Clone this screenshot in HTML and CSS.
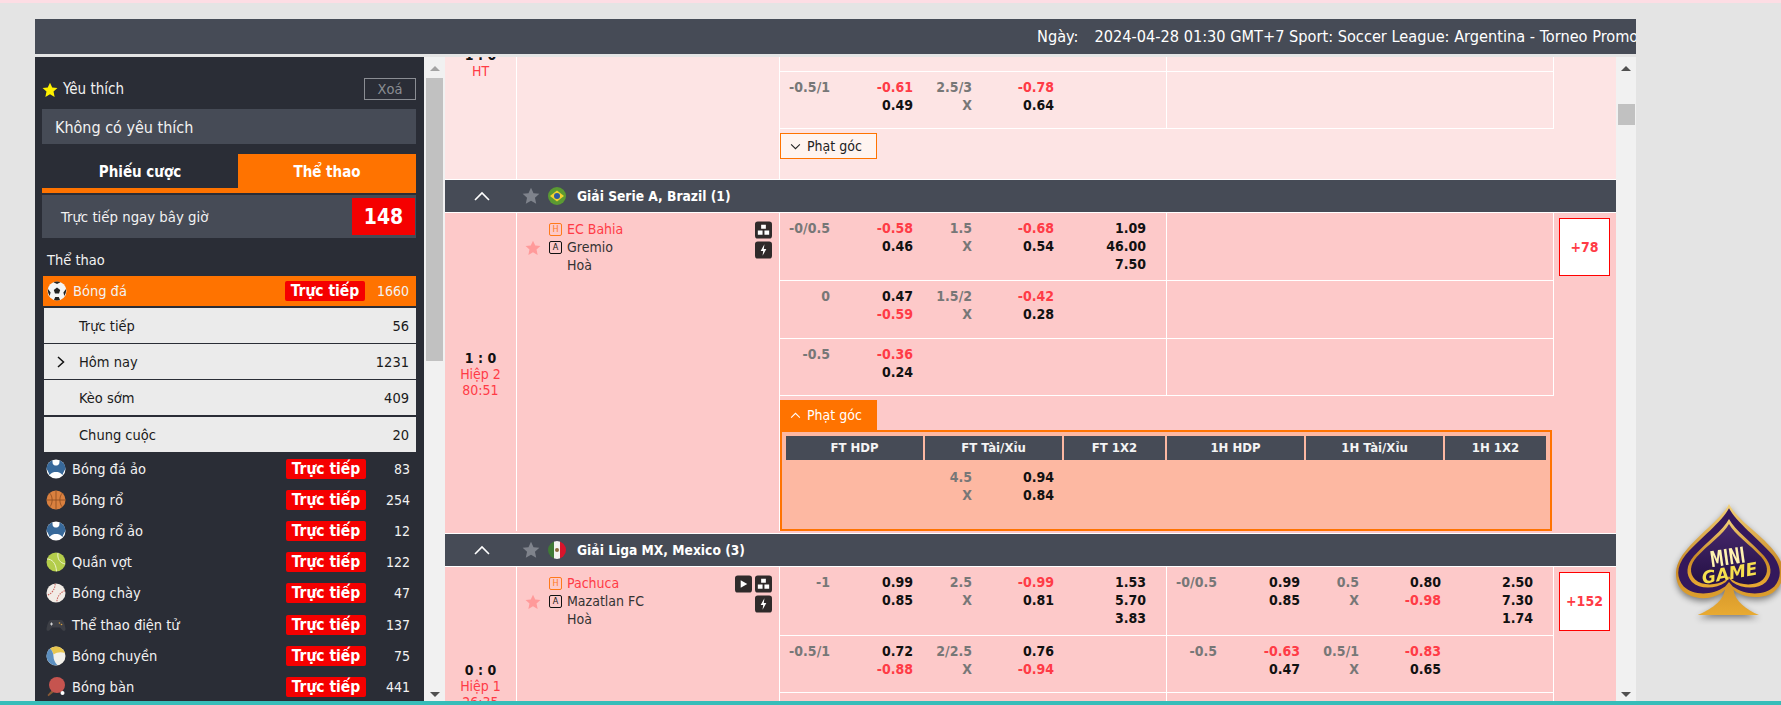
FILE: index.html
```html
<!DOCTYPE html>
<html lang="vi">
<head>
  <meta charset="UTF-8" />
  <title>Trực tiếp</title>
  <link rel="stylesheet" href="styles.css">
</head>
<body>
  <svg class="icon-defs" width="0" height="0">
    <defs>
      <symbol id="i-soccer" viewBox="0 0 20 20">
        <circle cx="10" cy="10" r="9.5" fill="#f4f4f4"/>
        <path d="M10 6.5l3.2 2.4-1.2 3.700H8l-1.200-3.700z" fill="#222"/>
        <path d="M6.500 1.200L10 3l3.500-1.800A9.500 9.500 0 0 0 6.500 1.200zM1 8l2.600 3.400L2.700 15A9.500 9.500 0 0 1 1 8zM19 8l-2.600 3.400.9 3.600A9.500 9.500 0 0 0 19 8zM7 19l1.200-3h3.600l1.200 3a9.500 9.500 0 0 1-6 0z" fill="#222"/>
      </symbol>
      <symbol id="i-virtual" viewBox="0 0 20 20">
        <circle cx="10" cy="10" r="9.500" fill="#fff"/>
        <path d="M6.500 1.200C6.500 4 6.500 6.500 10 6.500S13.500 4 13.500 1.200A9.500 9.500 0 0 1 19.500 10C18 12 17.500 13 16.500 16 14.500 13.500 12 13 10 13S5.500 13.500 3.500 16C2.500 13 2 12 .5 10A9.500 9.500 0 0 1 6.500 1.200z" fill="#38699a"/>
      </symbol>
      <symbol id="i-basket" viewBox="0 0 20 20">
        <circle cx="10" cy="10" r="9.500" fill="#d9803f"/>
        <path d="M10 .5v19M.5 10h19M3.500 3C7 6 7 14 3.500 17M16.500 3C13 6 13 14 16.500 17" stroke="#8a4a20" stroke-width=".8" fill="none"/>
      </symbol>
      <symbol id="i-tennis" viewBox="0 0 20 20">
        <circle cx="10" cy="10" r="9.500" fill="#b4cd4b"/>
        <path d="M12 .8C11 7 14 11 19.300 12M1 7c5 0 9 4 9.500 12.300" stroke="#eef3c8" stroke-width="1" fill="none"/>
      </symbol>
      <symbol id="i-baseball" viewBox="0 0 20 20">
        <circle cx="10" cy="10" r="9.500" fill="#f2ece6"/>
        <path d="M4 3c3 4 3 10 0 14M16 3c-3 4-3 10 0 14" stroke="#c9605a" stroke-width="1" stroke-dasharray="1.500 1" fill="none" transform="rotate(35 10 10)"/>
      </symbol>
      <symbol id="i-pad" viewBox="0 0 20 20">
        <path d="M5 5h10c2.500 0 4 5 4.500 9 .2 2-2 2.500-3.200 1L14 12.500H6L3.700 15c-1.200 1.500-3.400 1-3.200-1C1 10 2.500 5 5 5z" fill="#3d3f46"/>
        <path d="M4 9h3M5.500 7.500v3" stroke="#ddd" stroke-width=".9"/>
        <circle cx="13.500" cy="8" r=".8" fill="#d9a03f"/>
        <circle cx="15.500" cy="9.500" r=".8" fill="#d9a03f"/>
      </symbol>
      <symbol id="i-volley" viewBox="0 0 20 20">
        <circle cx="10" cy="10" r="9.500" fill="#f2f0ea"/>
        <path d="M4 2.600A9.500 9.500 0 0 1 19 7C15 5.500 11 6 7.500 8.500 6.800 6 5.500 4 4 2.600z" fill="#e8c64f"/>
        <path d="M4 2.600C6 4.500 7.500 7.500 7.500 10.500 7.500 13.500 9 16.500 11.500 19.300 5.500 20 .5 15.500.5 10 .5 7 2 4.300 4 2.600z" fill="#5c8fc0"/>
      </symbol>
      <symbol id="i-pong" viewBox="0 0 20 20">
        <path d="M6.500 12.500L1.500 18l1 1.200 6-4.700z" fill="#8a5a35"/>
        <circle cx="11" cy="8" r="8" fill="#c6544f"/>
        <circle cx="16.500" cy="16" r="2" fill="#fff"/>
      </symbol>
      <symbol id="i-star" viewBox="0 0 20 20">
        <path d="M10 .8l2.800 6.100 6.500.7-4.900 4.400 1.400 6.600L10 15.300l-5.800 3.300 1.400-6.600L.7 7.600l6.500-.7z"/>
      </symbol>
      <symbol id="i-stack" viewBox="0 0 18 18">
        <rect width="18" height="18" rx="3" fill="#2f2a2a"/>
        <path d="M6.500 3.500h5v4.200h-5zM3 9.500h5v4.500H3zM10 9.500h5v4.500h-5z" fill="#fff"/>
      </symbol>
      <symbol id="i-bolt" viewBox="0 0 18 18">
        <rect width="18" height="18" rx="3" fill="#2f2a2a"/>
        <path d="M10 3L6 10h2.700L8 15l4-7H9.300z" fill="#fff"/>
      </symbol>
      <symbol id="i-play" viewBox="0 0 18 18">
        <rect width="18" height="18" rx="3" fill="#2f2a2a"/>
        <path d="M6 5l7 4-7 4z" fill="#fff"/>
      </symbol>
    </defs>
  </svg>

  <div class="top-strip"></div>

  <div class="page">
    <div class="title-bar">
      <span>Ngày:</span><span class="title-info">2024-04-28 01:30 GMT+7 Sport: Soccer League: Argentina - Torneo Promo</span>
    </div>

    <div class="layout">
      <aside class="sidebar">
        <div class="fav-head">
          <svg class="fav-star"><use href="#i-star"/></svg>
          <span class="fav-title">Yêu thích</span>
          <button class="fav-clear">Xoá</button>
        </div>
        <div class="fav-empty">Không có yêu thích</div>

        <div class="tabs">
          <div class="tab">Phiếu cược</div>
          <div class="tab tab-active">Thể thao</div>
        </div>

        <div class="live-now">
          <span>Trực tiếp ngay bây giờ</span>
          <span class="live-count">148</span>
        </div>

        <div class="sport-label">Thể thao</div>

        <div class="sport sport-active">
          <svg class="sport-icon"><use href="#i-soccer"/></svg>
          <span class="sport-name">Bóng đá</span>
          <span class="pill">Trực tiếp</span>
          <span class="sport-count">1660</span>
        </div>

        <div class="subs">
          <div class="sub"><span class="sub-name">Trực tiếp</span><span>56</span></div>
          <div class="sub">
            <svg class="sub-arrow" viewBox="0 0 8 12"><path d="M1 1l5.500 5L1 11" fill="none" stroke="#111" stroke-width="1.500"/></svg>
            <span class="sub-name">Hôm nay</span><span>1231</span>
          </div>
          <div class="sub"><span class="sub-name">Kèo sớm</span><span>409</span></div>
          <div class="sub sub-last"><span class="sub-name">Chung cuộc</span><span>20</span></div>
        </div>

        <div class="sport">
          <svg class="sport-icon"><use href="#i-virtual"/></svg>
          <span class="sport-name">Bóng đá ảo</span><span class="pill">Trực tiếp</span><span class="sport-count">83</span>
        </div>
        <div class="sport">
          <svg class="sport-icon"><use href="#i-basket"/></svg>
          <span class="sport-name">Bóng rổ</span><span class="pill">Trực tiếp</span><span class="sport-count">254</span>
        </div>
        <div class="sport">
          <svg class="sport-icon"><use href="#i-virtual"/></svg>
          <span class="sport-name">Bóng rổ ảo</span><span class="pill">Trực tiếp</span><span class="sport-count">12</span>
        </div>
        <div class="sport">
          <svg class="sport-icon"><use href="#i-tennis"/></svg>
          <span class="sport-name">Quần vợt</span><span class="pill">Trực tiếp</span><span class="sport-count">122</span>
        </div>
        <div class="sport">
          <svg class="sport-icon"><use href="#i-baseball"/></svg>
          <span class="sport-name">Bóng chày</span><span class="pill">Trực tiếp</span><span class="sport-count">47</span>
        </div>
        <div class="sport">
          <svg class="sport-icon"><use href="#i-pad"/></svg>
          <span class="sport-name">Thể thao điện tử</span><span class="pill">Trực tiếp</span><span class="sport-count">137</span>
        </div>
        <div class="sport">
          <svg class="sport-icon"><use href="#i-volley"/></svg>
          <span class="sport-name">Bóng chuyền</span><span class="pill">Trực tiếp</span><span class="sport-count">75</span>
        </div>
        <div class="sport">
          <svg class="sport-icon"><use href="#i-pong"/></svg>
          <span class="sport-name">Bóng bàn</span><span class="pill">Trực tiếp</span><span class="sport-count">441</span>
        </div>
      </aside>

      <div class="scrollbar">
        <span class="arrow-up arrow-faded"></span>
        <div class="track"><div class="thumb thumb-side"></div></div>
        <span class="arrow-down"></span>
      </div>

      <main class="board">
        <section class="match match-first">
          <div class="score">
            <div class="score-num">1 : 0</div>
            <div class="score-time">HT</div>
          </div>
          <div class="teams"></div>
          <div class="markets">
            <div class="odds-row odds-filler"><div class="half"></div><div class="half"></div></div>
            <div class="odds-row">
              <div class="half">
                <div class="c"><div class="hdp">-0.5/1</div></div>
                <div class="c"><div class="neg">-0.61</div><div>0.49</div></div>
                <div class="c"><div class="hdp">2.5/3</div><div class="hdp">X</div></div>
                <div class="c"><div class="neg">-0.78</div><div>0.64</div></div>
                <div class="c"></div>
              </div>
              <div class="half"></div>
            </div>
            <div class="corner-tab">
              <svg class="corner-arrow" viewBox="0 0 12 8"><path d="M1 1.500l5 5 5-5" fill="none" stroke="#222" stroke-width="1.200"/></svg>
              Phạt góc
            </div>
          </div>
          <div class="more"></div>
        </section>

        <div class="league">
          <svg class="league-arrow" viewBox="0 0 16 10"><path d="M1 9l7-7 7 7" fill="none" stroke="#fff" stroke-width="1.600"/></svg>
          <svg class="league-star"><use href="#i-star"/></svg>
          <svg class="flag" viewBox="0 0 18 18">
            <circle cx="9" cy="9" r="9" fill="#5b9a32"/>
            <path d="M9 3.500L16 9l-7 5.500L2 9z" fill="#f2d230"/>
            <circle cx="9" cy="9" r="3" fill="#2f5a9e"/>
          </svg>
          <span class="league-name">Giải Serie A, Brazil (1)</span>
        </div>

        <section class="match match-open">
          <div class="score">
            <div class="score-num">1 : 0</div>
            <div class="score-time">Hiệp 2</div>
            <div class="score-time">80:51</div>
          </div>
          <div class="teams">
            <svg class="team-star"><use href="#i-star"/></svg>
            <div class="team-list">
              <div class="team team-home"><span class="badge">H</span>EC Bahia</div>
              <div class="team"><span class="badge">A</span>Gremio</div>
              <div class="team team-draw">Hoà</div>
            </div>
            <div class="team-tools">
              <div class="tool-line"><svg class="tool"><use href="#i-stack"/></svg></div>
              <div class="tool-line"><svg class="tool"><use href="#i-bolt"/></svg></div>
            </div>
          </div>
          <div class="markets">
            <div class="odds-row">
              <div class="half">
                <div class="c"><div class="hdp">-0/0.5</div></div>
                <div class="c"><div class="neg">-0.58</div><div>0.46</div></div>
                <div class="c"><div class="hdp">1.5</div><div class="hdp">X</div></div>
                <div class="c"><div class="neg">-0.68</div><div>0.54</div></div>
                <div class="c"><div>1.09</div><div>46.00</div><div>7.50</div></div>
              </div>
              <div class="half"></div>
            </div>
            <div class="odds-row odds-row-58">
              <div class="half">
                <div class="c"><div class="hdp">0</div></div>
                <div class="c"><div>0.47</div><div class="neg">-0.59</div></div>
                <div class="c"><div class="hdp">1.5/2</div><div class="hdp">X</div></div>
                <div class="c"><div class="neg">-0.42</div><div>0.28</div></div>
                <div class="c"></div>
              </div>
              <div class="half"></div>
            </div>
            <div class="odds-row">
              <div class="half">
                <div class="c"><div class="hdp">-0.5</div></div>
                <div class="c"><div class="neg">-0.36</div><div>0.24</div></div>
                <div class="c"></div><div class="c"></div><div class="c"></div>
              </div>
              <div class="half"></div>
            </div>
            <div class="corner-tab corner-open">
              <svg class="corner-arrow" viewBox="0 0 12 8"><path d="M1 6.500l5-5 5 5" fill="none" stroke="#fff" stroke-width="1.200"/></svg>
              Phạt góc
            </div>
            <div class="corner-panel">
              <div class="corner-head">
                <div>FT HDP</div><div>FT Tài/Xỉu</div><div>FT 1X2</div>
                <div>1H HDP</div><div>1H Tài/Xỉu</div><div>1H 1X2</div>
              </div>
              <div class="corner-body">
                <div class="c"><div class="hdp">4.5</div><div class="hdp">X</div></div>
                <div class="c"><div>0.94</div><div>0.84</div></div>
              </div>
            </div>
          </div>
          <div class="more"><a class="more-btn more-short">+78</a></div>
        </section>

        <div class="league">
          <svg class="league-arrow" viewBox="0 0 16 10"><path d="M1 9l7-7 7 7" fill="none" stroke="#fff" stroke-width="1.600"/></svg>
          <svg class="league-star"><use href="#i-star"/></svg>
          <svg class="flag" viewBox="0 0 18 18">
            <clipPath id="flag-clip"><circle cx="9" cy="9" r="9"/></clipPath>
            <g clip-path="url(#flag-clip)">
              <rect width="6" height="18" fill="#3f7a36"/>
              <rect x="6" width="6" height="18" fill="#f4f4f0"/>
              <rect x="12" width="6" height="18" fill="#d9142b"/>
              <circle cx="9" cy="9" r="2" fill="#8a6a3a"/>
            </g>
          </svg>
          <span class="league-name">Giải Liga MX, Mexico (3)</span>
        </div>

        <section class="match match-last">
          <div class="score">
            <div class="score-num">0 : 0</div>
            <div class="score-time">Hiệp 1</div>
            <div class="score-time">26:35</div>
          </div>
          <div class="teams">
            <svg class="team-star"><use href="#i-star"/></svg>
            <div class="team-list">
              <div class="team team-home"><span class="badge">H</span>Pachuca</div>
              <div class="team"><span class="badge">A</span>Mazatlan FC</div>
              <div class="team team-draw">Hoà</div>
            </div>
            <div class="team-tools">
              <div class="tool-line"><svg class="tool"><use href="#i-play"/></svg><svg class="tool"><use href="#i-stack"/></svg></div>
              <div class="tool-line"><svg class="tool"><use href="#i-bolt"/></svg></div>
            </div>
          </div>
          <div class="markets">
            <div class="odds-row odds-row-69">
              <div class="half">
                <div class="c"><div class="hdp">-1</div></div>
                <div class="c"><div>0.99</div><div>0.85</div></div>
                <div class="c"><div class="hdp">2.5</div><div class="hdp">X</div></div>
                <div class="c"><div class="neg">-0.99</div><div>0.81</div></div>
                <div class="c"><div>1.53</div><div>5.70</div><div>3.83</div></div>
              </div>
              <div class="half">
                <div class="c"><div class="hdp">-0/0.5</div></div>
                <div class="c"><div>0.99</div><div>0.85</div></div>
                <div class="c"><div class="hdp">0.5</div><div class="hdp">X</div></div>
                <div class="c"><div>0.80</div><div class="neg">-0.98</div></div>
                <div class="c"><div>2.50</div><div>7.30</div><div>1.74</div></div>
              </div>
            </div>
            <div class="odds-row">
              <div class="half">
                <div class="c"><div class="hdp">-0.5/1</div></div>
                <div class="c"><div>0.72</div><div class="neg">-0.88</div></div>
                <div class="c"><div class="hdp">2/2.5</div><div class="hdp">X</div></div>
                <div class="c"><div>0.76</div><div class="neg">-0.94</div></div>
                <div class="c"></div>
              </div>
              <div class="half">
                <div class="c"><div class="hdp">-0.5</div></div>
                <div class="c"><div class="neg">-0.63</div><div>0.47</div></div>
                <div class="c"><div class="hdp">0.5/1</div><div class="hdp">X</div></div>
                <div class="c"><div class="neg">-0.83</div><div>0.65</div></div>
                <div class="c"></div>
              </div>
            </div>
            <div class="odds-row"><div class="half"></div><div class="half"></div></div>
          </div>
          <div class="more"><a class="more-btn more-tall">+152</a></div>
        </section>
      </main>

      <div class="scrollbar scrollbar-main">
        <span class="arrow-up"></span>
        <div class="track"><div class="thumb thumb-main"></div></div>
        <span class="arrow-down"></span>
      </div>
    </div>
  </div>

  <div class="bottom-strip"></div>

  <svg class="mini-game" viewBox="0 0 363 420">
    <defs>
      <linearGradient id="gold" x1="0" y1="0" x2="0" y2="1">
        <stop offset="0" stop-color="#f3d27a"/>
        <stop offset=".55" stop-color="#c98a26"/>
        <stop offset="1" stop-color="#e8aa32"/>
      </linearGradient>
      <linearGradient id="plum" x1="0" y1="0" x2="0" y2="1">
        <stop offset="0" stop-color="#46286c"/>
        <stop offset="1" stop-color="#241044"/>
      </linearGradient>
      <path id="spade" d="M207 42C190 80 120 130 75 185 50 215 40 250 55 285 72 322 130 335 172 316 182 311 190 306 195 298 190 335 150 360 113 375H297C260 360 225 335 220 298 232 316 285 330 325 315 360 300 378 262 367 225 352 180 290 130 255 100 235 80 215 60 207 42Z"/>
      <path id="spade-core" d="M0-100C-15-70-60-35-90 0-110 25-112 50-95 70-75 90-35 90-8 70L0 60 8 70C35 90 75 90 95 70 112 50 110 25 90 0 60-35 15-70 0-100Z"/>
    </defs>
    <use href="#spade" fill="url(#gold)"/>
    <use href="#spade-core" fill="#34185c" transform="translate(207 193) scale(1.43 1.38)"/>
    <use href="#spade-core" fill="url(#gold)" transform="translate(207 198) scale(1.17 1.11)"/>
    <use href="#spade-core" fill="url(#plum)" transform="translate(207 200) scale(1.07 .98)"/>
    <text class="mini-word" x="150" y="224" textLength="105" lengthAdjust="spacingAndGlyphs" transform="rotate(-8 205 200)">MINI</text>
    <text class="game-word" x="124" y="268" textLength="168" lengthAdjust="spacingAndGlyphs" transform="rotate(-10 205 245)">GAME</text>
  </svg>
</body>
</html>
```

FILE: styles.css
```css
html, body {
  margin: 0;
  padding: 0;
  height: 705px;
  overflow: hidden;
}

body {
  background: #e4e4e4;
  font-family: "DejaVu Sans Condensed", "DejaVu Sans", sans-serif;
  font-size: 14px;
  color: #111;
  position: relative;
}

.icon-defs {
  position: absolute;
}

.top-strip {
  height: 3px;
  background: #fddde4;
}

.bottom-strip {
  height: 4px;
  background: #37bdb9;
}

.page {
  width: 1601px;
  margin: 16px 0 0 35px;
}

.title-bar {
  height: 35px;
  background: #464b56;
  color: #fff;
  display: flex;
  align-items: center;
  padding-left: 1002px;
  font-size: 16.2px;
  white-space: nowrap;
  overflow: hidden;
  box-sizing: border-box;
}

.title-info {
  margin-left: 16px;
}

.layout {
  display: flex;
  height: 644px;
  margin-top: 3px;
  overflow: hidden;
}

/* left column */
.sidebar {
  width: 389px;
  flex: none;
  box-sizing: border-box;
  background: #2a2d36;
  padding: 21px 8px 0 7px;
  color: #f2f2f2;
  font-size: 14.5px;
  overflow: hidden;
}

.fav-head {
  display: flex;
  align-items: center;
  height: 22px;
}

.fav-star {
  width: 16px;
  height: 16px;
  fill: #fff200;
  margin: 2px 5px 0 0;
}

.fav-title {
  flex: 1;
  font-size: 15px;
}

.fav-clear {
  width: 52px;
  height: 22px;
  padding: 0;
  background: none;
  border: 1px solid #8a8d93;
  color: #8a8d93;
  font: inherit;
}

.fav-empty {
  height: 35px;
  margin-top: 9px;
  padding-left: 13px;
  background: #464b56;
  font-size: 16px;
  line-height: 37px;
}

.tabs {
  display: flex;
  height: 39px;
  margin-top: 10px;
  border-bottom: 5px solid #ff7300;
  box-sizing: border-box;
  font-size: 15px;
  font-weight: bold;
  color: #fff;
}

.tab {
  width: 196px;
  text-align: center;
  line-height: 36px;
}

.tab-active {
  width: 178px;
  background: #ff7300;
}

.live-now {
  display: flex;
  justify-content: space-between;
  align-items: center;
  height: 43px;
  margin-top: 2px;
  padding: 0 1px 0 19px;
  background: #464b56;
  font-size: 14.8px;
}

.live-count {
  width: 63px;
  height: 37px;
  background: #f50000;
  color: #fff;
  font-size: 21px;
  font-weight: bold;
  line-height: 38px;
  text-align: center;
}

.sport-label {
  display: flex;
  align-items: center;
  height: 32px;
  padding: 6px 0 0 5px;
}

.sport {
  display: flex;
  align-items: center;
  height: 31.2px;
  padding: 0 6px 0 4px;
}

.sport-active {
  height: 30px;
  margin-left: 1px;
  padding-right: 7px;
  background: #ff7300;
}

.sport-icon {
  width: 20px;
  height: 20px;
  margin-right: 6px;
  flex: none;
}

.sport-name {
  flex: 1;
}

.pill {
  width: 80px;
  height: 20px;
  border-radius: 2px;
  background: #f50000;
  color: #fff;
  font-size: 15.5px;
  font-weight: bold;
  line-height: 21px;
  text-align: center;
}

.sport-count {
  width: 44px;
  font-size: 14px;
  text-align: right;
}

.subs {
  margin: 2px 0 1px 2px;
}

.sub {
  display: flex;
  align-items: center;
  height: 35px;
  margin-bottom: 1px;
  padding-right: 7px;
  background: #ebebeb;
  color: #1a1a1a;
  position: relative;
}

.sub:nth-child(3) {
  margin-bottom: 2px;
}

.sub-last {
  margin-bottom: 0;
}

.sub-arrow {
  position: absolute;
  left: 13px;
  width: 8px;
  height: 12px;
}

.sub-name {
  flex: 1;
  padding-left: 35px;
}

/* scrollbars */
.scrollbar {
  width: 21px;
  flex: none;
  background: #f1f1f1;
  display: flex;
  flex-direction: column;
  align-items: center;
}

.scrollbar-main {
  width: 20px;
}

.track {
  flex: 1;
  width: 100%;
}

.thumb {
  background: #c1c1c1;
  margin: 0 auto;
  width: 17px;
}

.thumb-side {
  height: 283px;
}

.thumb-main {
  height: 21px;
  margin-top: 26px;
}

.arrow-up, .arrow-down {
  display: block;
  width: 0;
  flex: none;
  border-left: 5px solid transparent;
  border-right: 5px solid transparent;
}

.arrow-up {
  margin-top: 9px;
  margin-bottom: 7px;
  border-bottom: 5px solid #505050;
}

.arrow-faded {
  border-bottom-color: #a3a3a3;
}

.arrow-down {
  margin-top: 8px;
  margin-bottom: 4px;
  border-top: 5px solid #505050;
}

/* match board */
.board {
  width: 1171px;
  flex: none;
  overflow: hidden;
}

.match {
  display: flex;
  background: #fdc9c9;
}

.match-first {
  background: #fde4e4;
  margin-top: -110px;
  height: 232px;
  border-bottom: 1px solid #fff;
}

.match-open {
  padding-bottom: 2px;
  border-bottom: 1px solid #fff;
}

.match-last {
  min-height: 234px;
}

.score {
  width: 71px;
  flex: none;
  display: flex;
  flex-direction: column;
  justify-content: center;
  align-items: center;
  line-height: 16px;
  border-right: 1px solid #fff;
}

.match-open .score, .match-last .score {
  padding-top: 4px;
}

.score-num {
  font-weight: bold;
}

.score-time {
  color: #ff3b46;
}

.teams {
  width: 262px;
  flex: none;
  box-sizing: border-box;
  display: flex;
  align-items: flex-start;
  padding: 7px 7px 0 8px;
}

.team-star {
  width: 16px;
  height: 16px;
  fill: #ff9a9a;
  margin: 20px 8px 0 0;
  flex: none;
}

.team-list {
  flex: 1;
}

.team {
  height: 18px;
  line-height: 18px;
  display: flex;
  align-items: center;
  color: #333;
}

.team-home {
  color: #ff3b46;
}

.team-draw {
  padding-left: 18px;
}

.badge {
  width: 11px;
  height: 11px;
  border: 1px solid currentColor;
  border-radius: 2px;
  margin-right: 5px;
  font-size: 9px;
  line-height: 11px;
  text-align: center;
  color: #111;
  flex: none;
}

.team-home .badge {
  color: #ff7a1a;
}

.team-tools {
  flex: none;
  display: flex;
  flex-direction: column;
  gap: 2px;
  margin-top: 1px;
}

.tool-line {
  display: flex;
  justify-content: flex-end;
  gap: 3px;
  height: 18px;
}

.tool {
  width: 17px;
  height: 18px;
}

.markets {
  width: 775px;
  flex: none;
  border-left: 1px solid #fff;
  box-sizing: border-box;
}

.odds-row {
  display: flex;
  min-height: 57px;
  box-sizing: border-box;
  border-bottom: 1px solid #fff;
  border-right: 1px solid #fff;
}

.odds-row-58 {
  min-height: 58px;
}

.odds-row-69 {
  min-height: 69px;
}

.odds-filler {
  height: 125px;
}

.half {
  width: 386px;
  flex: none;
  box-sizing: border-box;
  padding: 6px 0 7px;
  display: grid;
  grid-template-columns: 50px 83px 59px 82px 92px;
  grid-auto-rows: min-content;
  font-weight: bold;
  line-height: 18px;
}

.half + .half {
  width: 387px;
  border-left: 1px solid #fff;
}

.c {
  text-align: right;
}

.hdp {
  color: #777;
}

.neg {
  color: #ff3b46;
}

.corner-tab {
  width: 97px;
  height: 26px;
  box-sizing: border-box;
  margin-top: 4px;
  border: 1px solid #ff7300;
  background: #fff4f0;
  display: flex;
  align-items: center;
  padding-left: 9px;
  color: #222;
}

.corner-arrow {
  width: 11px;
  height: 7px;
  margin-right: 6px;
}

.corner-open {
  height: 30px;
  background: #ff7300;
  color: #fff;
}

.corner-panel {
  width: 772px;
  height: 101px;
  box-sizing: border-box;
  border: 2px solid #ff7300;
  background: #fdb8a2;
  padding: 4px;
}

.corner-head {
  display: grid;
  grid-template-columns: 137px 137px 101px 137px 137px 101px;
  column-gap: 2px;
  height: 24px;
  line-height: 24px;
  text-align: center;
  color: #f4f4f4;
  font-weight: bold;
  font-size: 13px;
}

.corner-head div {
  background: #464b56;
}

.corner-body {
  display: grid;
  grid-template-columns: 186px 82px;
  padding-top: 8px;
  font-weight: bold;
  line-height: 18px;
}

.more {
  flex: 1;
  padding: 5px 6px 0 5px;
}

.more-btn {
  display: block;
  box-sizing: border-box;
  background: #fff;
  border: 1px solid #f00;
  color: #ff3b46;
  font-weight: bold;
  text-align: center;
  width: 51px;
}

.more-short {
  height: 58px;
  line-height: 56px;
}

.more-tall {
  height: 59px;
  line-height: 57px;
}

.league {
  display: flex;
  align-items: center;
  height: 33px;
  box-sizing: border-box;
  background: #464b56;
  border-bottom: 1px solid #fff;
  color: #fff;
  font-size: 13.7px;
  font-weight: bold;
}

.league-arrow {
  width: 16px;
  height: 10px;
  margin-left: 29px;
}

.league-star {
  width: 18px;
  height: 18px;
  fill: #7f838c;
  margin-left: 32px;
}

.flag {
  width: 18px;
  height: 18px;
  margin-left: 8px;
}

.league-name {
  margin-left: 11px;
}

/* floating promo */
.mini-game {
  position: absolute;
  left: 1660px;
  top: 490px;
  width: 121px;
  height: 140px;
  filter: drop-shadow(0 3px 3px rgba(0, 0, 0, 0.45));
}

.mini-word {
  font-family: "DejaVu Sans Condensed", sans-serif;
  font-weight: bold;
  font-size: 66px;
  fill: #fff3b0;
}

.game-word {
  font-family: "DejaVu Sans Condensed", sans-serif;
  font-weight: bold;
  font-style: italic;
  font-size: 52px;
  fill: #f6df4e;
}
```
